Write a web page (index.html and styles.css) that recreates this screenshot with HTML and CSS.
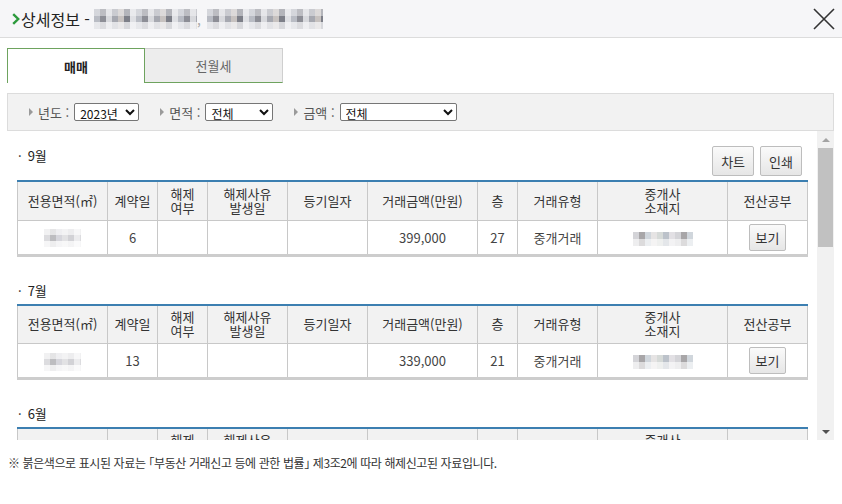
FILE: index.html
```html
<!DOCTYPE html>
<html lang="ko">
<head>
    <meta charset="UTF-8">
    <title>상세정보</title>
    <link rel="stylesheet" href="styles.css">
</head>
<body>
    <div class="header">
        <div class="title">
            <svg class="chev" width="8" height="12" viewBox="0 0 8 12"><path d="M1.2 1.2 L6.2 6 L1.2 10.8" fill="none" stroke="#2c9a3c" stroke-width="2.4"/></svg>
            <span>상세정보 -</span>
            <span class="mosaic title-a"></span><span class="comma">,</span><span class="mosaic title-b"></span>
        </div>
        <svg class="close" width="22" height="22" viewBox="0 0 22 22"><path d="M1 1 L21 21 M21 1 L1 21" stroke="#333" stroke-width="1.6"/></svg>
    </div>

    <div class="wrap">
        <div class="tabs">
            <div class="tab active">매매</div>
            <div class="tab">전월세</div>
        </div>

        <div class="filter">
            <div class="f-item">
                <i class="arrow"></i><span class="f-label">년도 :</span>
                <select class="sel sel-year"><option>2023년</option></select>
            </div>
            <div class="f-item">
                <i class="arrow"></i><span class="f-label">면적 :</span>
                <select class="sel sel-area"><option>전체</option></select>
            </div>
            <div class="f-item">
                <i class="arrow"></i><span class="f-label">금액 :</span>
                <select class="sel sel-price"><option>전체</option></select>
            </div>
        </div>

        <div class="body">
            <div class="content">
                <div class="section">
                    <div class="sec-head">
                        <h3><span class="dot">·</span>9월</h3>
                        <div class="btns">
                            <button class="btn">차트</button>
                            <button class="btn">인쇄</button>
                        </div>
                    </div>
                    <table class="deal">
                        <colgroup>
                            <col style="width:90px"><col style="width:50px"><col style="width:50px"><col style="width:80px"><col style="width:80px">
                            <col style="width:110px"><col style="width:40px"><col style="width:80px"><col style="width:130px"><col style="width:80px">
                        </colgroup>
                        <tr>
                            <th>전용면적(㎡)</th><th>계약일</th><th>해제<br>여부</th><th>해제사유<br>발생일</th><th>등기일자</th>
                            <th>거래금액(만원)</th><th>층</th><th>거래유형</th><th>중개사<br>소재지</th><th>전산공부</th>
                        </tr>
                        <tr>
                            <td><span class="mosaic cell-a"></span></td><td>6</td><td></td><td></td><td></td>
                            <td>399,000</td><td>27</td><td>중개거래</td><td><span class="mosaic cell-b"></span></td>
                            <td><button class="btn btn-sm">보기</button></td>
                        </tr>
                    </table>
                </div>

                <div class="section">
                    <div class="sec-head"><h3><span class="dot">·</span>7월</h3></div>
                    <table class="deal">
                        <colgroup>
                            <col style="width:90px"><col style="width:50px"><col style="width:50px"><col style="width:80px"><col style="width:80px">
                            <col style="width:110px"><col style="width:40px"><col style="width:80px"><col style="width:130px"><col style="width:80px">
                        </colgroup>
                        <tr>
                            <th>전용면적(㎡)</th><th>계약일</th><th>해제<br>여부</th><th>해제사유<br>발생일</th><th>등기일자</th>
                            <th>거래금액(만원)</th><th>층</th><th>거래유형</th><th>중개사<br>소재지</th><th>전산공부</th>
                        </tr>
                        <tr>
                            <td><span class="mosaic cell-a"></span></td><td>13</td><td></td><td></td><td></td>
                            <td>339,000</td><td>21</td><td>중개거래</td><td><span class="mosaic cell-b"></span></td>
                            <td><button class="btn btn-sm">보기</button></td>
                        </tr>
                    </table>
                </div>

                <div class="section">
                    <div class="sec-head"><h3><span class="dot">·</span>6월</h3></div>
                    <table class="deal">
                        <colgroup>
                            <col style="width:90px"><col style="width:50px"><col style="width:50px"><col style="width:80px"><col style="width:80px">
                            <col style="width:110px"><col style="width:40px"><col style="width:80px"><col style="width:130px"><col style="width:80px">
                        </colgroup>
                        <tr>
                            <th>전용면적(㎡)</th><th>계약일</th><th>해제<br>여부</th><th>해제사유<br>발생일</th><th>등기일자</th>
                            <th>거래금액(만원)</th><th>층</th><th>거래유형</th><th>중개사<br>소재지</th><th>전산공부</th>
                        </tr>
                    </table>
                </div>
            </div>

            <div class="scrollbar">
                <div class="sb-btn"><i class="tri-up"></i></div>
                <div class="sb-thumb"></div>
                <div class="sb-track"></div>
                <div class="sb-btn"><i class="tri-down"></i></div>
            </div>
        </div>
    </div>

    <div class="footer">※ 붉은색으로 표시된 자료는 ｢부동산 거래신고 등에 관한 법률｣ 제3조2에 따라 해제신고된 자료입니다.</div>
</body>
</html>
```

FILE: styles.css
```css
* {
    margin: 0;
    padding: 0;
    box-sizing: border-box;
}

body {
    width: 842px;
    height: 504px;
    overflow: hidden;
    font-family: "Noto Sans CJK KR", "Noto Sans", sans-serif;
    font-size: 13px;
    color: #333;
    background: #fff;
}

.header {
    height: 38px;
    background: #f6f6f8;
    border-bottom: 1px solid #dcdcdc;
    display: flex;
    align-items: center;
    justify-content: space-between;
    padding: 0 7px 0 12px;
}

.title {
    display: flex;
    align-items: center;
    font-size: 16px;
    color: #222;
    line-height: 20px;
}

.chev {
    margin-right: 1px;
}

.title span:nth-child(2) {
    margin-right: 4px;
}

.comma {
    width: 10px;
    color: #aaa;
    font-size: 14px;
}

.mosaic {
    display: inline-block;
    vertical-align: middle;
}

.title-a, .title-b {
    height: 20px;
    background:
        linear-gradient(rgba(246,246,248,0.45) 0 33%, transparent 33% 66%, rgba(246,246,248,0.75) 66%),
        repeating-linear-gradient(90deg, #b9bcc4 0 6px, #8d8e96 6px 12px, #d8d9dd 12px 18px, #a6a8b0 18px 24px, #c7c2c0 24px 30px, #7d7f88 30px 36px, #dfe0e4 36px 42px);
}

.title-a {
    width: 103px;
}

.title-b {
    width: 116px;
}

.close {
    margin-top: 1px;
}

.wrap {
    padding: 0 8px 0 7px;
}

.tabs {
    display: flex;
    margin-top: 10px;
    height: 35px;
}

.tab {
    width: 138px;
    display: flex;
    align-items: center;
    justify-content: center;
    background: #ededed;
    color: #666;
    border: 1px solid #cfcfcf;
    border-left: 0;
    border-bottom: 1px solid #6ea35e;
}

.tab.active {
    background: #fff;
    color: #222;
    font-weight: bold;
    border: 1px solid #6ea35e;
    border-bottom: 0;
}

.filter {
    margin-top: 10px;
    height: 38px;
    background: #f2f2f2;
    border: 1px solid #dcdcdc;
    display: flex;
    align-items: center;
    padding-left: 21px;
    gap: 21px;
}

.f-item {
    display: flex;
    align-items: center;
}

.arrow {
    width: 0;
    height: 0;
    border-left: 4px solid #9a9a9a;
    border-top: 4px solid transparent;
    border-bottom: 4px solid transparent;
    margin-right: 5px;
}

.f-label {
    color: #555;
    margin-right: 5px;
}

.sel {
    height: 18px;
    font-family: "Noto Sans CJK KR", sans-serif;
    font-size: 12px;
    color: #111;
    border: 1px solid #767676;
    border-radius: 2px;
    background: #fff;
    padding-left: 1px;
}

.sel-year { width: 65px; }
.sel-area { width: 68px; }
.sel-price { width: 117px; }

.body {
    display: flex;
    height: 309px;
}

.content {
    flex: 1;
    overflow: hidden;
    padding: 15px 10px 0 10px;
}

.section + .section {
    margin-top: 24px;
}

.sec-head {
    display: flex;
    justify-content: space-between;
    align-items: flex-start;
    margin-bottom: 3px;
}

.sec-head h3 {
    font-size: 13px;
    font-weight: normal;
    color: #222;
    line-height: 20px;
}

.dot {
    margin: 0 6px 0 1px;
}

.btns {
    display: flex;
    gap: 6px;
    margin-right: 5px;
    margin-bottom: 1px;
}

.btn {
    height: 30px;
    padding: 0 8px;
    font-family: "Noto Sans CJK KR", sans-serif;
    font-size: 13px;
    color: #333;
    background: linear-gradient(#fafafa, #e6e6e6);
    border: 1px solid #bdbdbd;
    border-radius: 2px;
}

.btn-sm {
    height: 27px;
    padding: 0 6px;
}

.deal {
    width: 790px;
    table-layout: fixed;
    border-collapse: collapse;
    border-top: 2px solid #3c7fb1;
    border-bottom: 3px solid #cdcdcd;
}

.deal th, .deal td {
    border: 1px solid #c8c8c8;
    text-align: center;
    font-weight: normal;
}

.deal th {
    height: 39px;
    background: #f2f2f2;
    color: #333;
    line-height: 14px;
}

.deal td {
    height: 35px;
    color: #444;
}

.cell-a {
    width: 37px;
    height: 18px;
    background:
        linear-gradient(rgba(255,255,255,0.6) 0 33%, transparent 33% 66%, rgba(255,255,255,0.75) 66%),
        repeating-linear-gradient(90deg, #dcdcdf 0 6px, #bdbdc0 6px 12px, #d6d6dc 12px 18px, #e2e2e4 18px 24px, #d2d2d6 24px 30px, #ececee 30px 36px);
}

.cell-b {
    width: 60px;
    height: 14px;
    background:
        linear-gradient(transparent 0 50%, rgba(255,255,255,0.6) 50%),
        repeating-linear-gradient(90deg, #d4d4d8 0 6px, #a8a6a8 6px 12px, #d0d6dc 12px 18px, #e6e4e4 18px 24px, #d6dad8 24px 30px, #bcc2ca 30px 36px, #e2e0e4 36px 42px);
}

.scrollbar {
    width: 17px;
    background: #f1f1f1;
    display: flex;
    flex-direction: column;
}

.sb-btn {
    height: 17px;
    display: flex;
    align-items: center;
    justify-content: center;
}

.tri-up, .tri-down {
    width: 0;
    height: 0;
    border-left: 4px solid transparent;
    border-right: 4px solid transparent;
}

.tri-up {
    border-bottom: 4px solid #a3a3a3;
}

.tri-down {
    border-top: 4px solid #505050;
}

.sb-thumb {
    height: 99px;
    margin: 0 1px;
    background: #c1c1c1;
}

.sb-track {
    flex: 1;
}

.footer {
    padding: 14px 0 0 8px;
    font-size: 12px;
    letter-spacing: -0.4px;
    color: #333;
    line-height: 18px;
}
```
